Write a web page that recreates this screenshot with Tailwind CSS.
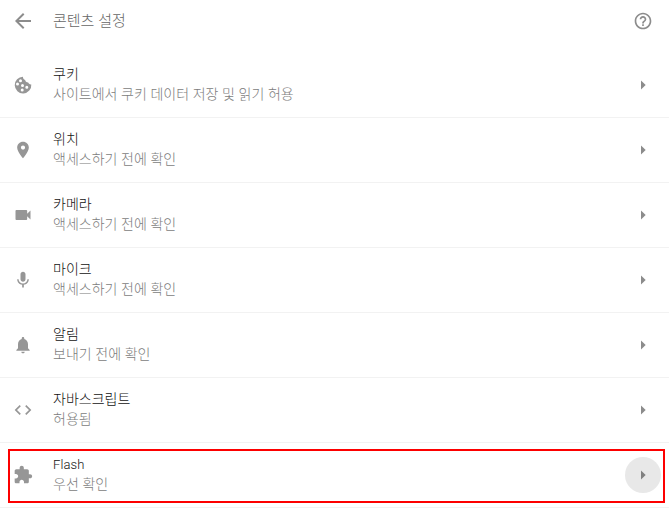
<!DOCTYPE html>
<html lang="ko">
  <head>
    <meta charset="UTF-8" />
    <meta name="viewport" content="width=device-width, initial-scale=1.0" />
    <title>콘텐츠 설정</title>
    <script src="https://cdn.jsdelivr.net/npm/@tailwindcss/browser@4"></script>
  </head>
  <body
    class="relative h-[520px] overflow-hidden bg-white font-['Noto_Sans_CJK_KR',sans-serif] text-[14px] font-light text-[#7c7c7c] [word-spacing:-0.3px]"
  >
    <header class="flex h-[53px] items-start pr-4 pl-[13px]">
      <svg class="mt-[9px] -ml-0.5 size-6 shrink-0 fill-[#8c8c8c]" viewBox="0 0 24 24">
        <path d="M20 11H7.83l5.59-5.59L12 4l-8 8 8 8 1.41-1.41L7.83 13H20v-2z" />
      </svg>
      <h1 class="mt-[10px] ml-[18px] flex-1 text-[15px] leading-5 text-[#666]">콘텐츠 설정</h1>
      <svg class="mt-[11px] size-5 shrink-0 fill-[#8c8c8c]" viewBox="0 0 24 24">
        <path
          d="M11 18h2v-2h-2v2zm1-16C6.48 2 2 6.48 2 12s4.48 10 10 10 10-4.48 10-10S17.52 2 12 2zm0 18c-4.41 0-8-3.59-8-8s3.59-8 8-8 8 3.59 8 8-3.59 8-8 8zm0-14c-2.21 0-4 1.79-4 4h2c0-1.1.9-2 2-2s2 .9 2 2c0 2-3 1.75-3 5h2c0-2.25 3-2.5 3-5 0-2.21-1.79-4-4-4z"
        />
      </svg>
    </header>

    <main>
      <!-- 쿠키 -->
      <div class="flex h-[65px] items-center border-b border-[#f2f2f2] pr-2 pl-[13px]">
        <svg class="size-5 shrink-0 fill-[#969696]" viewBox="0 0 20 20">
          <path
            fill-rule="evenodd"
            d="M10 1.8A8.3 8.3 0 1 0 18.3 9.4C16.8 9.6 15.6 8.9 15.2 7.6C13.5 7.6 12.2 6.6 12.2 5.1C10.6 4.7 9.8 3.3 10 1.8zM7.5 4.2a1.5 1.5 0 1 1 0 3a1.5 1.5 0 0 1 0-3zM4.5 7.6a1.5 1.5 0 1 1 0 3a1.5 1.5 0 0 1 0-3zM9.5 9a1.5 1.5 0 1 1 0 3a1.5 1.5 0 0 1 0-3zM13.8 10.7a1.5 1.5 0 1 1 0 3a1.5 1.5 0 0 1 0-3zM9.2 13.5a1.5 1.5 0 1 1 0 3a1.5 1.5 0 0 1 0-3z"
          />
        </svg>
        <div class="mb-1 ml-5 flex-1 leading-5">
          <div class="text-[#111]">쿠키</div>
          <div>사이트에서 쿠키 데이터 저장 및 읽기 허용</div>
        </div>
        <div class="flex size-9 items-center justify-center">
          <svg class="size-5 fill-[#8c8c8c]" viewBox="0 0 20 20"><path d="M8 5.5l4.7 4.5L8 14.5z" /></svg>
        </div>
      </div>

      <!-- 위치 -->
      <div class="flex h-[65px] items-center border-b border-[#f2f2f2] pr-2 pl-[13px]">
        <svg class="size-5 shrink-0 fill-[#969696]" viewBox="0 0 24 24">
          <path
            d="M12 2C8.13 2 5 5.13 5 9c0 5.25 7 13 7 13s7-7.75 7-13c0-3.87-3.13-7-7-7zm0 9.5c-1.38 0-2.5-1.12-2.5-2.5s1.12-2.5 2.5-2.5 2.5 1.12 2.5 2.5-1.12 2.5-2.5 2.5z"
          />
        </svg>
        <div class="mb-1 ml-5 flex-1 leading-5">
          <div class="text-[#111]">위치</div>
          <div>액세스하기 전에 확인</div>
        </div>
        <div class="flex size-9 items-center justify-center">
          <svg class="size-5 fill-[#8c8c8c]" viewBox="0 0 20 20"><path d="M8 5.5l4.7 4.5L8 14.5z" /></svg>
        </div>
      </div>

      <!-- 카메라 -->
      <div class="flex h-[65px] items-center border-b border-[#f2f2f2] pr-2 pl-[13px]">
        <svg class="size-5 shrink-0 fill-[#969696]" viewBox="0 0 24 24">
          <path
            d="M17 10.5V7c0-.55-.45-1-1-1H4c-.55 0-1 .45-1 1v10c0 .55.45 1 1 1h12c.55 0 1-.45 1-1v-3.5l4 4v-11l-4 4z"
          />
        </svg>
        <div class="mb-1 ml-5 flex-1 leading-5">
          <div class="text-[#111]">카메라</div>
          <div>액세스하기 전에 확인</div>
        </div>
        <div class="flex size-9 items-center justify-center">
          <svg class="size-5 fill-[#8c8c8c]" viewBox="0 0 20 20"><path d="M8 5.5l4.7 4.5L8 14.5z" /></svg>
        </div>
      </div>

      <!-- 마이크 -->
      <div class="flex h-[65px] items-center border-b border-[#f2f2f2] pr-2 pl-[13px]">
        <svg class="size-5 shrink-0 fill-[#969696]" viewBox="0 0 24 24">
          <path
            d="M12 14c1.66 0 2.99-1.34 2.99-3L15 5c0-1.66-1.34-3-3-3S9 3.34 9 5v6c0 1.66 1.34 3 3 3zm5.3-3c0 3-2.54 5.1-5.3 5.1S6.7 14 6.7 11H5c0 3.41 2.72 6.23 6 6.72V21h2v-3.28c3.28-.48 6-3.3 6-6.72h-1.7z"
          />
        </svg>
        <div class="mb-1 ml-5 flex-1 leading-5">
          <div class="text-[#111]">마이크</div>
          <div>액세스하기 전에 확인</div>
        </div>
        <div class="flex size-9 items-center justify-center">
          <svg class="size-5 fill-[#8c8c8c]" viewBox="0 0 20 20"><path d="M8 5.5l4.7 4.5L8 14.5z" /></svg>
        </div>
      </div>

      <!-- 알림 -->
      <div class="flex h-[65px] items-center border-b border-[#f2f2f2] pr-2 pl-[13px]">
        <svg class="size-5 shrink-0 fill-[#969696]" viewBox="0 0 24 24">
          <path
            d="M12 22c1.1 0 2-.9 2-2h-4c0 1.1.89 2 2 2zm6-6v-5c0-3.07-1.64-5.64-4.5-6.32V4c0-.83-.67-1.5-1.5-1.5s-1.5.67-1.5 1.5v.68C7.63 5.36 6 7.92 6 11v5l-2 2v1h16v-1l-2-2z"
          />
        </svg>
        <div class="mb-1 ml-5 flex-1 leading-5">
          <div class="text-[#111]">알림</div>
          <div>보내기 전에 확인</div>
        </div>
        <div class="flex size-9 items-center justify-center">
          <svg class="size-5 fill-[#8c8c8c]" viewBox="0 0 20 20"><path d="M8 5.5l4.7 4.5L8 14.5z" /></svg>
        </div>
      </div>

      <!-- 자바스크립트 -->
      <div class="flex h-[65px] items-center border-b border-[#f2f2f2] pr-2 pl-[13px]">
        <svg class="size-5 shrink-0 fill-[#969696]" viewBox="0 0 24 24">
          <path d="M9.4 16.6L4.8 12l4.6-4.6L8 6l-6 6 6 6 1.4-1.4zm5.2 0l4.6-4.6-4.6-4.6L16 6l6 6-6 6-1.4-1.4z" />
        </svg>
        <div class="mb-1 ml-5 flex-1 leading-5">
          <div class="text-[#111]">자바스크립트</div>
          <div>허용됨</div>
        </div>
        <div class="flex size-9 items-center justify-center">
          <svg class="size-5 fill-[#8c8c8c]" viewBox="0 0 20 20"><path d="M8 5.5l4.7 4.5L8 14.5z" /></svg>
        </div>
      </div>

      <!-- Flash -->
      <div class="relative flex h-[65px] items-center border-b border-[#f2f2f2] pr-2 pl-[13px]">
        <svg class="size-5 shrink-0 fill-[#969696]" viewBox="0 0 24 24">
          <path
            d="M20.5 11H19V7c0-1.1-.9-2-2-2h-4V3.5C13 2.12 11.88 1 10.5 1S8 2.12 8 3.5V5H4c-1.1 0-1.99.9-1.99 2v3.8H3.5c1.49 0 2.7 1.21 2.7 2.7s-1.21 2.7-2.7 2.7H2V20c0 1.1.9 2 2 2h3.8v-1.5c0-1.49 1.21-2.7 2.7-2.7 1.49 0 2.7 1.21 2.7 2.7V22H17c1.1 0 2-.9 2-2v-4h1.5c1.38 0 2.5-1.12 2.5-2.5S21.88 11 20.5 11z"
          />
        </svg>
        <div class="mb-1 ml-5 flex-1 leading-5">
          <div class="h-5 pt-0.5 font-[Roboto,sans-serif] text-[13px] font-light tracking-[0.1px] text-[#111]">Flash</div>
          <div>우선 확인</div>
        </div>
        <div class="flex size-9 items-center justify-center rounded-full bg-[#e8e8e8]">
          <svg class="size-5 fill-[#808080]" viewBox="0 0 20 20"><path d="M8 5.5l4.7 4.5L8 14.5z" /></svg>
        </div>
        <div class="absolute top-[6px] left-2 h-[54px] w-[657px] border-2 border-[#fd0000]"></div>
      </div>
    </main>
  </body>
</html>
